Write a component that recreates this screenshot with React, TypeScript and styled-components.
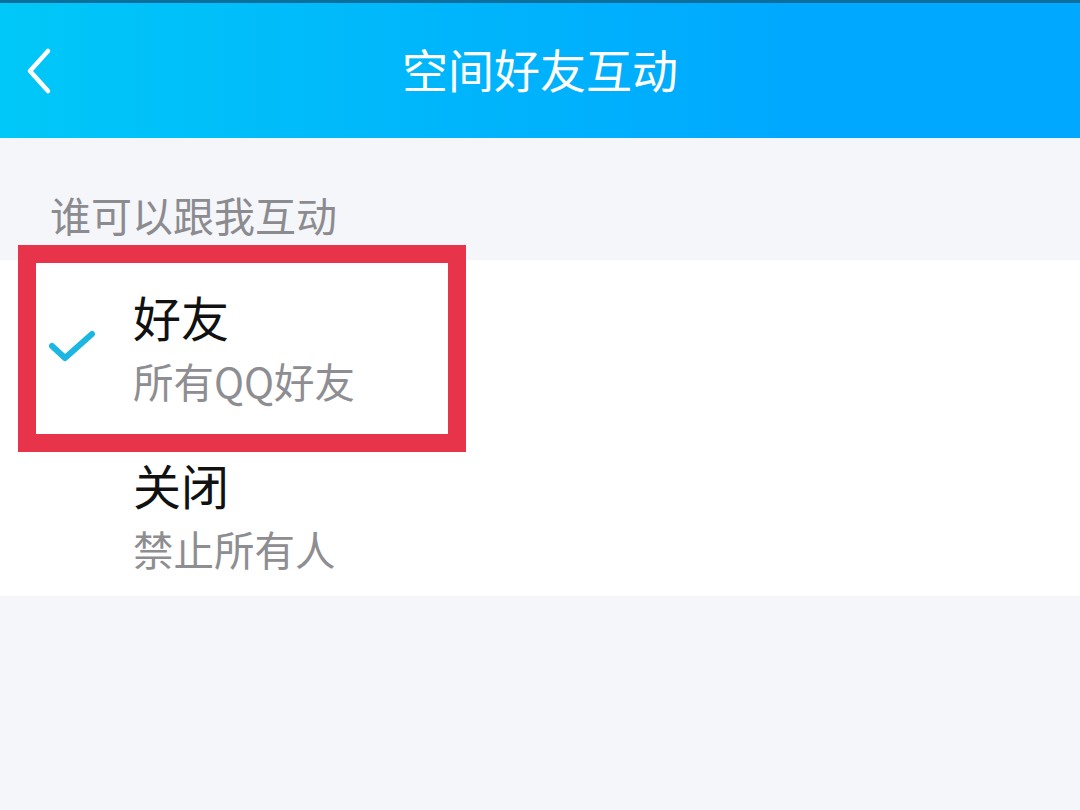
import React, { useState } from "react";
import styled, { createGlobalStyle } from "styled-components";

const GlobalStyle = createGlobalStyle`
  html, body {
    margin: 0;
    padding: 0;
    background: #f5f6fa;
  }
  body {
    font-family: "Noto Sans CJK SC", "Noto Sans", sans-serif;
  }
`;

const options = [
  { key: "friends", title: "好友", desc: "所有QQ好友" },
  { key: "off", title: "关闭", desc: "禁止所有人" },
];

export default function App() {
  const [selected, setSelected] = useState("friends");

  return (
    <Page>
      <GlobalStyle />
      <Header>
        <BackButton aria-label="返回">
          <svg width="30" height="48" viewBox="0 0 30 48">
            <path
              d="M24 4 L6 24 L24 44"
              fill="none"
              stroke="#fff"
              strokeWidth="4.5"
              strokeLinecap="round"
              strokeLinejoin="round"
            />
          </svg>
        </BackButton>
        <Title>空间好友互动</Title>
        <span />
      </Header>

      <SectionLabel>谁可以跟我互动</SectionLabel>

      <List>
        {options.map((o) => (
          <Row key={o.key} onClick={() => setSelected(o.key)}>
            <CheckCell>
              {selected === o.key && (
                <svg width="48" height="36" viewBox="0 0 48 36">
                  <path
                    d="M4 18 L17 30 L44 6"
                    fill="none"
                    stroke="#1cb6e2"
                    strokeWidth="6"
                    strokeLinecap="round"
                    strokeLinejoin="round"
                  />
                </svg>
              )}
            </CheckCell>
            <Texts>
              <RowTitle>{o.title}</RowTitle>
              <RowDesc>{o.desc}</RowDesc>
            </Texts>
            {o.key === "friends" && <Highlight />}
          </Row>
        ))}
      </List>
    </Page>
  );
}

const Page = styled.div`
  width: 1080px;
  height: 810px;
  background: #f5f6fa;
  overflow: hidden;
`;

const Header = styled.div`
  height: 138px;
  border-top: 3px solid #0b6e9c;
  background: linear-gradient(90deg, #00c8f8 0%, #00b6fb 40%, #00a8ff 75%, #00a9ff 100%);
  display: grid;
  grid-template-columns: 1fr auto 1fr;
  align-items: center;
  padding: 0 0 6px 24px;
  box-sizing: border-box;
`;

const BackButton = styled.div`
  display: flex;
  margin-top: 6px;
`;

const Title = styled.div`
  color: #fff;
  font-size: 46px;
  line-height: 68px;
  margin-left: -24px;
`;

const SectionLabel = styled.div`
  height: 122px;
  box-sizing: border-box;
  padding: 46px 0 0 50px;
  font-size: 41px;
  line-height: 60px;
  color: #8b8b90;
`;

const List = styled.div`
  background: #fff;
`;

const Row = styled.div`
  position: relative;
  height: 168px;
  display: flex;
  align-items: flex-start;
`;

const CheckCell = styled.div`
  width: 133px;
  flex: none;
  box-sizing: border-box;
  padding: 68px 0 0 48px;
  display: flex;
`;

const Texts = styled.div`
  display: flex;
  flex-direction: column;
  padding-top: 21px;
`;

const RowTitle = styled.div`
  font-size: 48px;
  line-height: 70px;
  color: #111;
`;

const RowDesc = styled.div`
  font-size: 40.5px;
  line-height: 59px;
  color: #8e8e92;
`;

const Highlight = styled.div`
  position: absolute;
  left: 18px;
  top: -15px;
  width: 448px;
  height: 207px;
  box-sizing: border-box;
  border: 18px solid #e8344b;
  pointer-events: none;
`;
